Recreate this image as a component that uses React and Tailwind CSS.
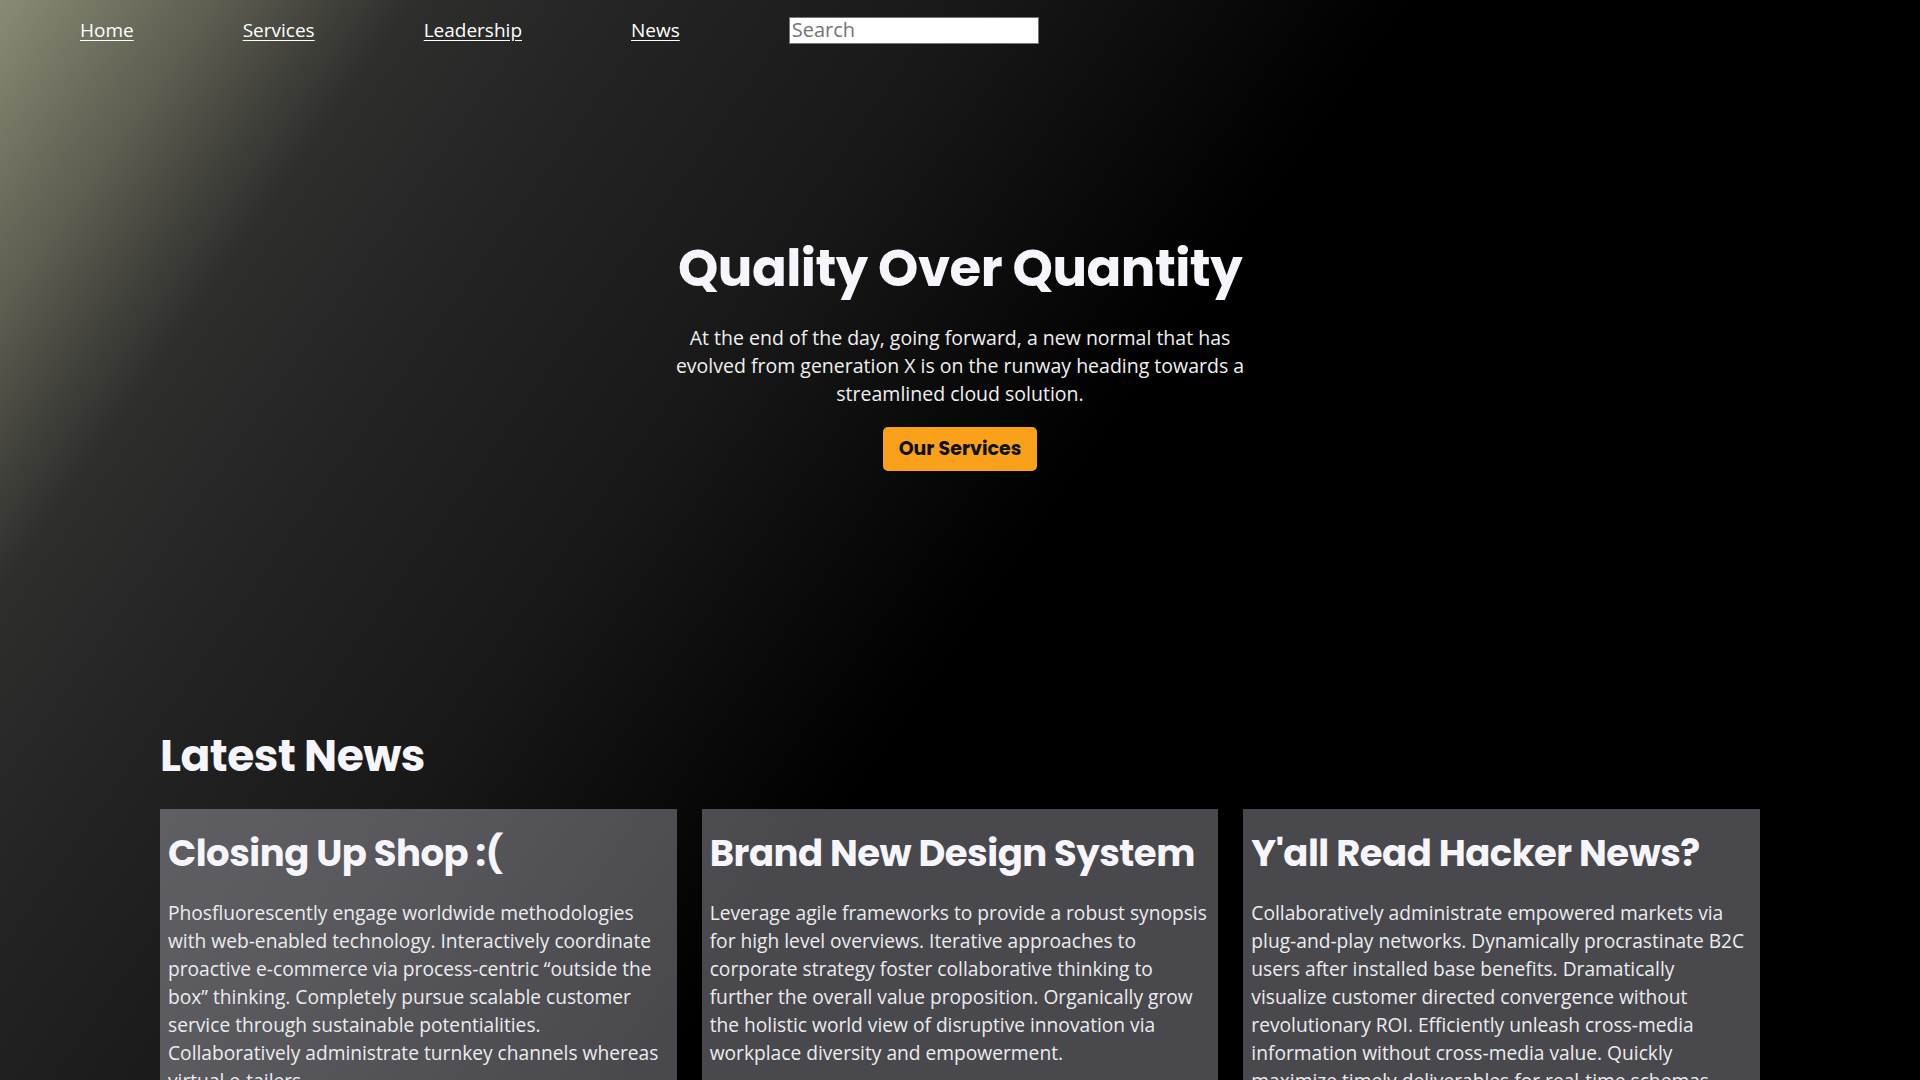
import React from 'react'

const navLinks = ['Home', 'Services', 'Leadership', 'News']

const news = [
  {
    title: 'Closing Up Shop :(',
    body: 'Phosfluorescently engage worldwide methodologies with web-enabled technology. Interactively coordinate proactive e-commerce via process-centric \u201coutside the box\u201d thinking. Completely pursue scalable customer service through sustainable potentialities. Collaboratively administrate turnkey channels whereas virtual e-tailers.',
  },
  {
    title: 'Brand New Design System',
    body: 'Leverage agile frameworks to provide a robust synopsis for high level overviews. Iterative approaches to corporate strategy foster collaborative thinking to further the overall value proposition. Organically grow the holistic world view of disruptive innovation via workplace diversity and empowerment.',
  },
  {
    title: "Y'all Read Hacker News?",
    body: 'Collaboratively administrate empowered markets via plug-and-play networks. Dynamically procrastinate B2C users after installed base benefits. Dramatically visualize customer directed convergence without revolutionary ROI. Efficiently unleash cross-media information without cross-media value. Quickly maximize timely deliverables for real-time schemas. Dramatically maintain clicks-and-mortar solutions without functional solutions.',
  },
]

const NewsCard = ({ title, body }) => (
  <article className="bg-[#f0f0ff]/30 px-[8px] pt-[8px] pb-[24px]">
    <h3 className="mt-[12px] font-['Poppins','Inter',sans-serif] text-[37px] leading-[48px] font-bold tracking-[-0.5px] text-[#f5f5fb]">
      {title}
    </h3>
    <p className="mt-[22px] text-[19.2px] leading-[28px] text-[#ececef]">{body}</p>
  </article>
)

export default function App() {
  return (
    <div className="min-h-screen bg-[linear-gradient(125deg,#8a8a76_0px,#5e5e51_175px,#2e2e2d_340px,#242424_520px,#181818_800px,#000_1150px)] font-['Open_Sans',sans-serif] text-white">
      {/* top nav */}
      <nav className="flex h-[60px] items-center gap-[109px] pl-[80px]">
        {navLinks.map((link) => (
          <a key={link} href="#" className="text-[19px] leading-[27px] text-white underline underline-offset-[3px]">
            {link}
          </a>
        ))}
        <input
          type="text"
          placeholder="Search"
          className="h-[27px] w-[250px] border border-[#767676] bg-white px-[2px] text-[20px] text-black placeholder:text-[#757575]"
        />
      </nav>

      {/* hero */}
      <section className="flex flex-col items-center pt-[177px] pb-[256px] text-center">
        <h1 className="font-['Poppins','Inter',sans-serif] text-[51.3px] leading-[62px] font-bold tracking-[-0.5px] text-[#f5f5fb]">
          Quality Over Quantity
        </h1>
        <p className="mt-[25px] max-w-[590px] text-[19.5px] leading-[28px] text-[#f0f0f0]">
          At the end of the day, going forward, a new normal that has evolved from generation X is on the runway heading
          towards a streamlined cloud solution.
        </p>
        <button className="mt-[19px] h-[44px] rounded-[5px] bg-[#f9a11b] px-[16px] font-['Poppins','Inter',sans-serif] text-[19px] font-bold text-[#111]">
          Our Services
        </button>
      </section>

      {/* latest news */}
      <section className="mx-auto max-w-[1600px]">
        <h2 className="font-['Poppins','Inter',sans-serif] text-[44px] leading-[58px] font-bold tracking-[-0.5px] text-[#f5f5fb]">
          Latest News
        </h2>
        <div className="mt-[24px] grid grid-cols-3 gap-[25px]">
          {news.map((item) => (
            <NewsCard key={item.title} {...item} />
          ))}
        </div>
      </section>
    </div>
  )
}
